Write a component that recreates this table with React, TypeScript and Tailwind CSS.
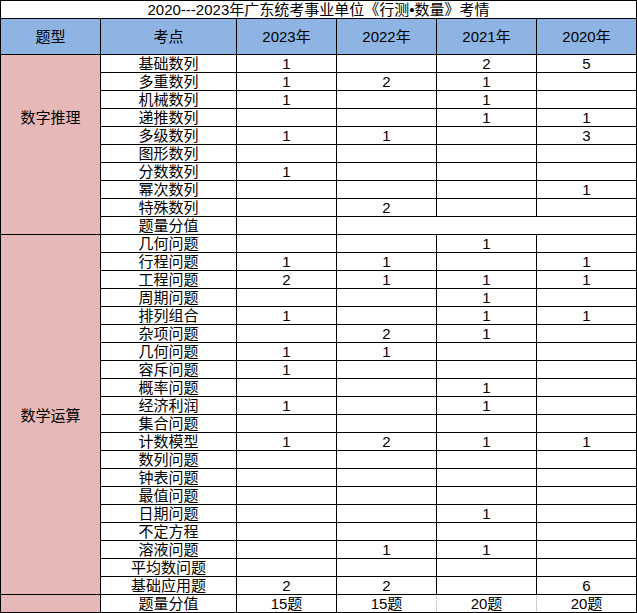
import React from "react";

const part1: string[][] = [
  ["基础数列", "1", "", "2", "5"],
  ["多重数列", "1", "2", "1", ""],
  ["机械数列", "1", "", "1", ""],
  ["递推数列", "", "", "1", "1"],
  ["多级数列", "1", "1", "", "3"],
  ["图形数列", "", "", "", ""],
  ["分数数列", "1", "", "", ""],
  ["幂次数列", "", "", "", "1"],
  ["特殊数列", "", "2", "", ""],
];

const part2: string[][] = [
  ["几何问题", "", "", "1", ""],
  ["行程问题", "1", "1", "", "1"],
  ["工程问题", "2", "1", "1", "1"],
  ["周期问题", "", "", "1", ""],
  ["排列组合", "1", "", "1", "1"],
  ["杂项问题", "", "2", "1", ""],
  ["几何问题", "1", "1", "", ""],
  ["容斥问题", "1", "", "", ""],
  ["概率问题", "", "", "1", ""],
  ["经济利润", "1", "", "1", ""],
  ["集合问题", "", "", "", ""],
  ["计数模型", "1", "2", "1", "1"],
  ["数列问题", "", "", "", ""],
  ["钟表问题", "", "", "", ""],
  ["最值问题", "", "", "", ""],
  ["日期问题", "", "", "1", ""],
  ["不定方程", "", "", "", ""],
  ["溶液问题", "", "1", "1", ""],
  ["平均数问题", "", "", "", ""],
  ["基础应用题", "2", "2", "", "6"],
];

const cell = "bg-white text-center pt-px leading-[16px] whitespace-nowrap";

function Row({ r }: { r: string[] }) {
  return (
    <>
      {r.map((v, i) => (
        <div key={i} className={cell}>
          {v}
        </div>
      ))}
    </>
  );
}

export default function App() {
  return (
    <div className="w-[637px] h-[613px] bg-white font-['Liberation_Sans','Noto_Sans_CJK_SC',sans-serif] text-[15px] text-black">
      <div className="grid grid-cols-[99px_135px_99px_99px_99px_99px] grid-rows-[17px_35px_repeat(31,17px)] gap-px bg-black p-px w-[637px]">
        <div className={`${cell} col-span-6`}>
          2020---2023年广东统考事业单位《行测•数量》考情
        </div>
        {["题型", "考点", "2023年", "2022年", "2021年", "2020年"].map((h) => (
          <div
            key={h}
            className="bg-[#8DB4E2] flex items-center justify-center leading-[16px]"
          >
            {h}
          </div>
        ))}

        <div className="bg-[#E6B8B7] row-span-10 text-center leading-[16px] pt-[55px]">
          数字推理
        </div>
        {part1.map((r, i) => (
          <Row key={i} r={r} />
        ))}
        <div className={cell}>题量分值</div>
        <div className={cell}></div>
        <div className={`${cell} col-span-3`}></div>

        <div className="bg-[#E6B8B7] row-span-20 flex items-center justify-center leading-[16px] pt-[3px]">
          数学运算
        </div>
        {part2.map((r, i) => (
          <Row key={i} r={r} />
        ))}

        <div className="bg-[#E6B8B7]"></div>
        <div className={cell}>题量分值</div>
        <div className={cell}>15题</div>
        <div className={cell}>15题</div>
        <div className={`${cell} -ml-px border-l border-[#cfcfcf]`}>20题</div>
        <div className={`${cell} -ml-px border-l border-[#cfcfcf]`}>20题</div>
      </div>
    </div>
  );
}
